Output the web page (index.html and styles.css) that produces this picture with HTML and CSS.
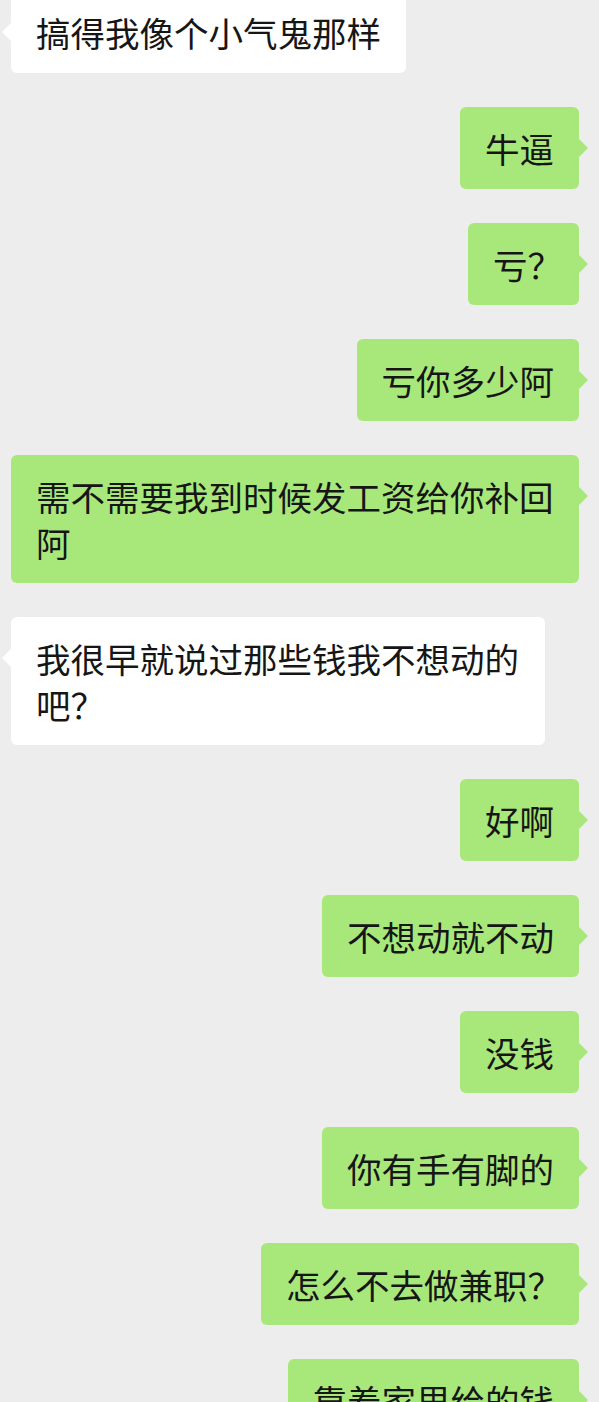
FILE: index.html
```html
<!DOCTYPE html>
<html lang="zh-CN">
<head>
  <meta charset="UTF-8" />
  <meta name="viewport" content="width=device-width, initial-scale=1.0" />
  <title>聊天</title>
  <link rel="stylesheet" href="styles.css">
</head>
<body>
  <div class="chat">
    <div class="msg other first"><div class="bubble">搞得我像个小气鬼那样</div></div>
    <div class="msg me"><div class="bubble">牛逼</div></div>
    <div class="msg me"><div class="bubble">亏<span class="punct">？</span></div></div>
    <div class="msg me"><div class="bubble">亏你多少阿</div></div>
    <div class="msg me"><div class="bubble">需不需要我到时候发工资给你补回阿</div></div>
    <div class="msg other"><div class="bubble">我很早就说过那些钱我不想动的吧<span class="punct">？</span></div></div>
    <div class="msg me"><div class="bubble">好啊</div></div>
    <div class="msg me"><div class="bubble">不想动就不动</div></div>
    <div class="msg me"><div class="bubble">没钱</div></div>
    <div class="msg me"><div class="bubble">你有手有脚的</div></div>
    <div class="msg me"><div class="bubble">怎么不去做兼职<span class="punct">？</span></div></div>
    <div class="msg me"><div class="bubble">靠着家里给的钱</div></div>
  </div>
</body>
</html>
```

FILE: styles.css
```css
html, body { margin: 0; height: 1402px; overflow: hidden; }
body { background: #ededed; font-family: "Noto Sans CJK SC", "Noto Sans", sans-serif; color: #161616; }
.chat { display: flex; flex-direction: column; gap: 34px; padding: 0 20px 0 11px; }
.msg { display: flex; }
.msg.first { margin-top: -9px; }
.msg.me { justify-content: flex-end; }
.bubble { position: relative; max-width: 100%; box-sizing: border-box; padding: 18px 25px; font-size: 34.5px; line-height: 46px; border-radius: 6px; background: #fff; }
.other .bubble { max-width: 534px; }
.me .bubble { background: #a8e87b; }
.bubble::after { content: ""; position: absolute; top: 32px; border-top: 9px solid transparent; border-bottom: 9px solid transparent; }
.other .bubble::after { left: -9px; border-right: 9px solid #fff; }
.me .bubble::after { right: -9px; border-left: 9px solid #a8e87b; }
.punct { letter-spacing: -8px; }
```
